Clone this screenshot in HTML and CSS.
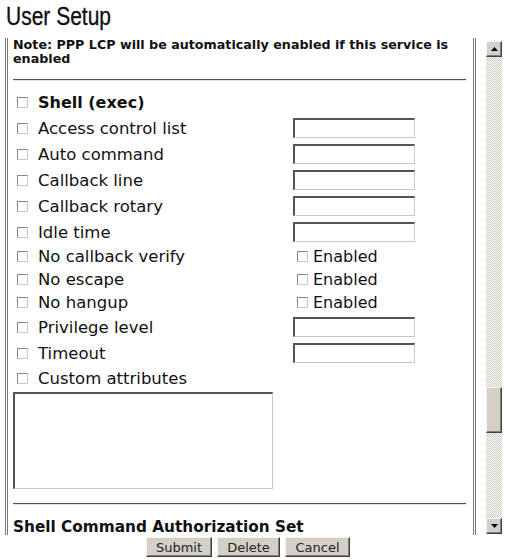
FILE: index.html
```html
<!DOCTYPE html>
<html>
<head>
<meta charset="utf-8">
<link rel="stylesheet" href="styles.css">
</head>
<body>
<h1 class="title"><span class="narrow">User Setup</span></h1>
<div class="frame">
  <div class="viewport">
    <div class="content">
      <p class="note">Note: PPP LCP will be automatically enabled if this service is enabled</p>
      <div class="rule"></div>
      <div class="opts">
        <div class="row r25"><span class="cb"></span><span class="lbl bold">Shell (exec)</span></div>
        <div class="row r26"><span class="cb"></span><span class="lbl">Access control list</span><span class="field"><span class="tb"></span></span></div>
        <div class="row r26"><span class="cb"></span><span class="lbl">Auto command</span><span class="field"><span class="tb"></span></span></div>
        <div class="row r26"><span class="cb"></span><span class="lbl">Callback line</span><span class="field"><span class="tb"></span></span></div>
        <div class="row r26"><span class="cb"></span><span class="lbl">Callback rotary</span><span class="field"><span class="tb"></span></span></div>
        <div class="row r26"><span class="cb"></span><span class="lbl">Idle time</span><span class="field"><span class="tb"></span></span></div>
        <div class="row r23"><span class="cb"></span><span class="lbl">No callback verify</span><span class="field en"><span class="cb"></span><span class="enl">Enabled</span></span></div>
        <div class="row r23"><span class="cb"></span><span class="lbl">No escape</span><span class="field en"><span class="cb"></span><span class="enl">Enabled</span></span></div>
        <div class="row r23"><span class="cb"></span><span class="lbl">No hangup</span><span class="field en"><span class="cb"></span><span class="enl">Enabled</span></span></div>
        <div class="row r26"><span class="cb"></span><span class="lbl">Privilege level</span><span class="field"><span class="tb"></span></span></div>
        <div class="row r26"><span class="cb"></span><span class="lbl">Timeout</span><span class="field"><span class="tb"></span></span></div>
        <div class="row r25"><span class="cb"></span><span class="lbl">Custom attributes</span></div>
      </div>
      <div class="ta"></div>
      <div class="rule rule2"></div>
      <h3 class="sub">Shell Command Authorization Set</h3>
    </div>
  </div>
  <div class="scrollbar">
    <div class="sbtn"><svg width="7" height="4" viewBox="0 0 7 4"><path d="M3.5 0 L7 4 L0 4 Z" fill="#000"/></svg></div>
    <div class="track">
      <div class="thumb"></div>
    </div>
    <div class="sbtn"><svg width="7" height="4" viewBox="0 0 7 4"><path d="M0 0 L7 0 L3.5 4 Z" fill="#000"/></svg></div>
  </div>
</div>
<div class="actions">
  <span class="btn b1">Submit</span>
  <span class="btn b2">Delete</span>
  <span class="btn b3">Cancel</span>
</div>
</body>
</html>
```
FILE: styles.css
```css
html, body { margin: 0; padding: 0; background: #fff; }
body { font-family: "DejaVu Sans", Verdana, sans-serif; color: #000; width: 505px; height: 560px; overflow: hidden; }

.title {
  margin: 0;
  padding: 2px 0 0 6px;
  height: 36px;
  box-sizing: border-box;
  font-family: "Liberation Sans", Arial, sans-serif;
  font-weight: normal;
  font-size: 25px;
  line-height: 28px;
  color: #111;
}
.narrow { display: inline-block; transform: scaleX(0.84); transform-origin: 0 0; -webkit-text-stroke: 0.3px #111; }

.frame { display: flex; margin-left: 5px; margin-top: 2px; height: 497px; }

.viewport {
  width: 471px;
  box-sizing: border-box;
  border-left: 3px double #777;
  border-right: 3px double #777;
  overflow: hidden;
}
.content { padding: 0 7px 0 5px; }

.note {
  margin: 0;
  font-weight: bold;
  font-size: 12.7px;
  line-height: 14px;
  color: #111;
}
.rule { margin-top: 13px; height: 0; border-top: 1px solid #555; border-bottom: 1px solid #e6e6e6; }

.opts { padding-top: 9px; }
.row { display: flex; align-items: center; }
.r25 { height: 25px; }
.r26 { height: 26px; }
.r23 { height: 23px; }

.cb {
  display: inline-block;
  width: 11px; height: 11px;
  box-sizing: border-box;
  border: 1px solid #888;
  border-right-color: #c8c8c8;
  border-bottom-color: #c8c8c8;
  background: #fff;
  flex: none;
}
.row > .cb { margin-left: 4px; }
.lbl { margin-left: 10px; font-size: 16.5px; width: 255px; white-space: nowrap; color: #111; }
.bold { font-weight: bold; font-size: 16px; }
.field { display: flex; align-items: center; }
.tb {
  display: block;
  width: 122px; height: 20px;
  box-sizing: border-box;
  border-style: solid;
  border-width: 2px 1px 1px 2px;
  border-color: #555 #c8c8c8 #c8c8c8 #555;
  background: #fff;
}
.en .cb { margin-left: 4px; }
.enl { margin-left: 5px; font-size: 16px; color: #111; }

.ta {
  margin-top: 1px;
  width: 260px; height: 97px;
  box-sizing: border-box;
  border-style: solid;
  border-width: 2px 1px 1px 2px;
  border-color: #555 #c8c8c8 #c8c8c8 #555;
}
.rule2 { margin-top: 14px; }
.sub { margin: 12px 0 0 0; font-size: 15.3px; line-height: 20px; font-weight: bold; color: #111; }

.scrollbar {
  margin-left: 10px;
  margin-top: 3px;
  width: 16px;
  height: 493px;
  display: flex;
  flex-direction: column;
  background: repeating-conic-gradient(#cfcbc3 0 25%, #fff 0 50%) 0 0 / 2px 2px;
}
.sbtn {
  height: 16px;
  box-sizing: border-box;
  background: #d4d0c8;
  border: 1px solid;
  border-color: #f4f4f4 #404040 #404040 #f4f4f4;
  box-shadow: inset -1px -1px 0 #808080;
  display: flex; align-items: center; justify-content: center;
  flex: none;
}
.track { flex: 1; position: relative; }
.thumb {
  position: absolute;
  left: 0; right: 0;
  top: 330px; height: 46px;
  box-sizing: border-box;
  background: #d4d0c8;
  border: 1px solid;
  border-color: #f4f4f4 #404040 #404040 #f4f4f4;
  box-shadow: inset -1px -1px 0 #808080;
}

.actions {
  display: flex;
  justify-content: center;
  gap: 5px;
  padding-right: 9px;
  margin-top: 2px;
}
.btn {
  display: inline-flex;
  align-items: center;
  justify-content: center;
  height: 20px;
  box-sizing: border-box;
  background: #d4d0c8;
  border: 1px solid;
  border-color: #f4f4f4 #404040 #404040 #f4f4f4;
  box-shadow: inset -1px -1px 0 #808080;
  font-size: 13px;
  color: #222;
}
.b1 { width: 66px; }
.b2 { width: 63px; }
.b3 { width: 65px; }
```
